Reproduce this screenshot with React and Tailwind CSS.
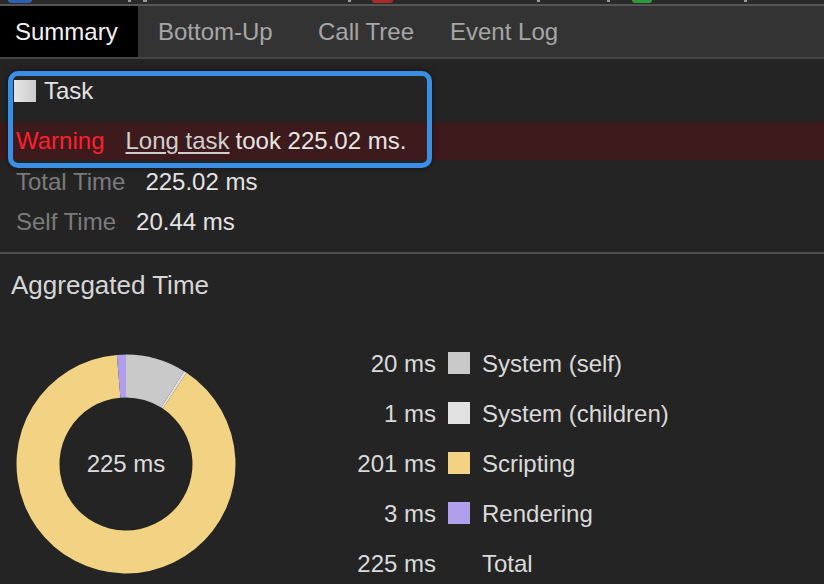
import React from "react";

const CX = 110;
const CY = 110;
const RO = 109.5;
const RI = 66.5;

function pt(r, deg) {
  const a = ((deg - 90) * Math.PI) / 180;
  return [CX + r * Math.cos(a), CY + r * Math.sin(a)];
}

function sector(a0, a1) {
  const large = a1 - a0 > 180 ? 1 : 0;
  const [x0, y0] = pt(RO, a0);
  const [x1, y1] = pt(RO, a1);
  const [x2, y2] = pt(RI, a1);
  const [x3, y3] = pt(RI, a0);
  return `M${x0} ${y0} A${RO} ${RO} 0 ${large} 1 ${x1} ${y1} L${x2} ${y2} A${RI} ${RI} 0 ${large} 0 ${x3} ${y3} Z`;
}

const parts = [
  { v: 20, color: "#c9c9c9" },
  { v: 1, color: "#e2e2e2" },
  { v: 201, color: "#f2d283" },
  { v: 3, color: "#b0a0ec" },
];

function Donut() {
  const total = parts.reduce((s, p) => s + p.v, 0);
  let acc = 0;
  const paths = parts.map((p, i) => {
    const a0 = (acc / total) * 360;
    acc += p.v;
    const a1 = (acc / total) * 360;
    return <path key={i} d={sector(a0, a1)} fill={p.color} />;
  });
  return (
    <div className="grid w-[220px] h-[220px] mt-[15px] ml-[16px] shrink-0">
      <svg width="220" height="220" viewBox="0 0 220 220" className="[grid-area:1/1]">
        {paths}
      </svg>
      <div className="[grid-area:1/1] flex items-center justify-center text-[24px] text-[#dcdcdc]">
        225 ms
      </div>
    </div>
  );
}

const legend = [
  { v: "20 ms", label: "System (self)", color: "bg-[#c9c9c9]" },
  { v: "1 ms", label: "System (children)", color: "bg-[#e2e2e2]" },
  { v: "201 ms", label: "Scripting", color: "bg-[#f2d283]" },
  { v: "3 ms", label: "Rendering", color: "bg-[#b0a0ec]" },
  { v: "225 ms", label: "Total", color: "" },
];

export default function App() {
  return (
    <div
      className="w-[824px] h-[584px] overflow-hidden bg-[#242424] text-[#e0e0e0]"
      style={{ fontFamily: '"Liberation Sans", Arial, sans-serif' }}
    >
      {/* top strip */}
      <div className="h-[4px] bg-[#2a2a2a] flex items-start">
        <div className="ml-[8px] w-[24px] h-[3px] rounded-b-full bg-[#2f5fb0]" />
        <div className="ml-[96px] w-[3px] h-[2px] bg-[#9a9a9a]" />
        <div className="ml-[12px] w-[4px] h-[2px] bg-[#9a9a9a]" />
        <div className="ml-[201px] w-[3px] h-[2px] bg-[#9a9a9a]" />
        <div className="ml-[21px] w-[21px] h-[3px] rounded-b-full bg-[#a82a2a]" />
        <div className="ml-[144px] w-[3px] h-[2px] bg-[#9a9a9a]" />
        <div className="ml-[67px] w-[3px] h-[2px] bg-[#9a9a9a]" />
        <div className="ml-[22px] w-[20px] h-[3px] rounded-b-full bg-[#2f9a3a]" />
        <div className="ml-[92px] w-[3px] h-[2px] bg-[#9a9a9a]" />
      </div>
      <div className="h-[2px] bg-[#555555]" />

      {/* tabs */}
      <div className="h-[51px] bg-[#333333] flex text-[24px]">
        <div className="w-[138px] pl-[15px] bg-black text-[#f2f2f2] flex items-center">Summary</div>
        <div className="w-[160px] pl-[20px] text-[#a6a6a6] flex items-center">Bottom-Up</div>
        <div className="w-[132px] pl-[20px] text-[#a6a6a6] flex items-center">Call Tree</div>
        <div className="pl-[20px] text-[#a6a6a6] flex items-center">Event Log</div>
      </div>
      <div className="h-[2px] bg-[#454545]" />

      {/* details */}
      <div className="relative pt-[21px]">
        <div className="flex items-center h-[22px] pl-[14px]">
          <div className="w-[22px] h-[22px] bg-gradient-to-r from-[#e6e6e6] to-[#cccccc]" />
          <span className="ml-[8px] text-[24px] leading-[22px] text-[#e2e2e2]">Task</span>
        </div>
        <div className="mt-[20px] h-[38px] bg-[#3d1a1c] flex items-center pl-[16px] text-[24px] leading-[38px]">
          <span className="text-[#ff1f2d]">Warning</span>
          <span className="ml-[21px] underline underline-offset-[3px] decoration-[1.5px] text-[#cfcfcf]">Long task</span>
          <span className="ml-[6px] text-[#e6e6e6]">took 225.02 ms.</span>
        </div>
        <div className="h-[40px] mt-[1.5px] flex items-baseline pl-[16px] leading-[40px]">
          <span className="text-[24px] text-[#7b7b7b]">Total Time</span>
          <span className="ml-[20px] text-[24px] text-[#e3e3e3]">225.02 ms</span>
        </div>
        <div className="h-[40px] flex items-baseline pl-[16px] leading-[40px]">
          <span className="text-[24px] text-[#7b7b7b]">Self Time</span>
          <span className="ml-[20px] text-[24px] text-[#e3e3e3]">20.44 ms</span>
        </div>

        <div className="pointer-events-none absolute left-[8px] top-[12px] w-[424px] h-[97px] rounded-[10px] border-[5px] border-[#3a8ee4] shadow-[0_0_6px_rgba(0,0,0,0.5)]" />
      </div>

      <div className="mt-[10.5px] h-[2px] bg-[#4f4f4f]" />

      {/* aggregated */}
      <div className="mt-[16px] pl-[11px] text-[26px] leading-[30px] text-[#d6d6d6]">Aggregated Time</div>

      <div className="mt-[39px] flex items-start">
        <Donut />
        <div className="ml-[100px] flex flex-col">
          {legend.map((r) => (
            <div key={r.label} className="h-[50px] flex items-center text-[24px] text-[#dadada]">
              <span className="w-[100px] text-right">{r.v}</span>
              <span className={`ml-[12px] w-[22px] h-[22px] mb-[3px] ${r.color}`} />
              <span className="ml-[12px]">{r.label}</span>
            </div>
          ))}
        </div>
      </div>
    </div>
  );
}
